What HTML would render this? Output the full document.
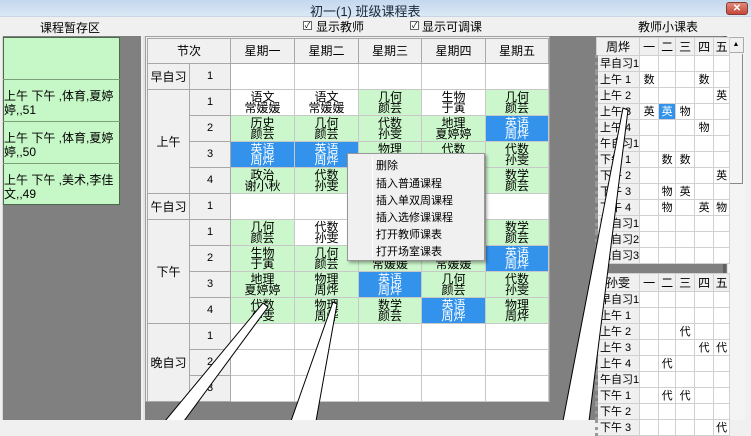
<!DOCTYPE html>
<html><head><meta charset="utf-8">
<style>
*{margin:0;padding:0;box-sizing:border-box}
body{width:751px;height:420px;overflow:hidden;background:#f0f0f0;font-family:"Liberation Sans","Noto Sans CJK SC","WenQuanYi Zen Hei",sans-serif;font-size:12px;color:#000;position:relative}
.abs{position:absolute}
#title{left:0;top:0;width:751px;height:17px;background:linear-gradient(#c4d8ee,#dbe7f4);border-bottom:1px solid #c8d6e6}
#title span{position:absolute;left:310px;top:1px;font-size:13px;color:#1a2a3a}
#close{left:726px;top:2px;width:22px;height:13px;background:linear-gradient(#e08a7a,#c4473a);border:1px solid #8a3a30;border-radius:3px;color:#fff;font-size:10px;text-align:center;line-height:11px;font-weight:bold}
.cb{width:9px;height:9px;border:1px solid #666;background:#fff;font-size:8px;line-height:7px;text-align:center}
table{border-collapse:collapse;table-layout:fixed}
#main{position:absolute;left:147px;top:38px}
#main td{border:1px solid #c8c8c8;height:26px;text-align:center;vertical-align:middle;line-height:11px;font-size:12px;padding:0;overflow:hidden}
#main tr.h td{height:25px;background:#f0f0f0;border-color:#a8a8a8;line-height:14px}
#main td.l{background:#f0f0f0;border-color:#a8a8a8;line-height:14px}
#main td.n{background:#f0f0f0;border-color:#a8a8a8;font-size:11px}
.g{background:#ccf7cc}
.b{background:#3393ec;color:#fff}
.w{background:#fff}
.tt{position:absolute;left:595px}
.tt td{border:1px solid #d0d0d0;height:16px;text-align:center;font-size:11px;padding:0;line-height:14px;background:#fff;overflow:hidden;white-space:nowrap}
.tt td.lb{background:#f0f0f0;text-align:left;padding-left:2px;border-left:3px dotted #999}
.tt tr.h td{background:#f0f0f0;height:18px;font-size:12px}
.tt td.sb{background:#3393ec;color:#fff}
#menu{left:347px;top:153px;width:138px;height:108px;background:#f0f0f0;border:1px solid #979797;box-shadow:2px 2px 3px rgba(0,0,0,.35)}
#menu .gut{position:absolute;left:24px;top:2px;bottom:2px;width:1px;background:#e0e0e0;border-right:1px solid #fff}
#menu div.i{position:absolute;left:28px;font-size:11px}
.lrow{position:absolute;left:3px;width:117px;height:42px;border-top:1px solid #7aa07a;font-size:12px;line-height:14px;padding-top:9px;padding-left:1px}
</style></head><body>
<div id="title" class="abs"><span>初一(1) 班级课程表</span></div>
<div id="close" class="abs">✕</div>

<div class="abs" style="left:40px;top:19px;font-size:12px">课程暂存区</div>
<div class="abs cb" style="left:303px;top:21px">✓</div>
<div class="abs" style="left:316px;top:18px;font-size:12px">显示教师</div>
<div class="abs cb" style="left:410px;top:21px">✓</div>
<div class="abs" style="left:422px;top:18px;font-size:12px">显示可调课</div>
<div class="abs" style="left:638px;top:18px;font-size:12px">教师小课表</div>

<!-- left panel -->
<div class="abs" style="left:2px;top:36px;width:139px;height:384px;background:#808080;border-left:1px solid #d8d8d8"></div>
<div class="abs" style="left:3px;top:37px;width:117px;height:168px;background:#c6f7c6;border:1px solid #4a6a4a"></div>
<div class="lrow" style="top:79px">上午 下午 ,体育,夏婷<br>婷,,51</div>
<div class="lrow" style="top:121px">上午 下午 ,体育,夏婷<br>婷,,50</div>
<div class="lrow" style="top:163px">上午 下午 ,美术,李佳<br>文,,49</div>

<!-- main area -->
<div class="abs" style="left:143px;top:36px;width:452px;height:384px;background:#808080;border-left:2px solid #e4e4e4"></div>
<div class="abs" style="left:145px;top:36px;width:405px;height:366px;background:#f0f0f0;border:1px solid #a0a0a0"></div>
<table id="main">
<colgroup><col style="width:42px"><col style="width:41px"><col style="width:64px"><col style="width:64px"><col style="width:63px"><col style="width:64px"><col style="width:63px"></colgroup>
<tr class="h"><td colspan="2">节次</td><td>星期一</td><td>星期二</td><td>星期三</td><td>星期四</td><td>星期五</td></tr>
<tr><td class="l">早自习</td><td class="n">1</td><td class="w"></td><td class="w"></td><td class="w"></td><td class="w"></td><td class="w"></td></tr>
<tr><td class="l" rowspan="4">上午</td><td class="n">1</td><td class="w">语文<br>常媛媛</td><td class="w">语文<br>常媛媛</td><td class="g">几何<br>颜芸</td><td class="w">生物<br>于寅</td><td class="g">几何<br>颜芸</td></tr>
<tr><td class="n">2</td><td class="g">历史<br>颜芸</td><td class="g">几何<br>颜芸</td><td class="g">代数<br>孙雯</td><td class="g">地理<br>夏婷婷</td><td class="b">英语<br>周烨</td></tr>
<tr><td class="n">3</td><td class="b">英语<br>周烨</td><td class="b">英语<br>周烨</td><td class="g">物理<br>周烨</td><td class="g">代数<br>孙雯</td><td class="g">代数<br>孙雯</td></tr>
<tr><td class="n">4</td><td class="g">政治<br>谢小秋</td><td class="g">代数<br>孙雯</td><td class="g"></td><td class="g"></td><td class="g">数学<br>颜芸</td></tr>
<tr><td class="l">午自习</td><td class="n">1</td><td class="w"></td><td class="w"></td><td class="w"></td><td class="w"></td><td class="w"></td></tr>
<tr><td class="l" rowspan="4">下午</td><td class="n">1</td><td class="g">几何<br>颜芸</td><td class="w">代数<br>孙雯</td><td class="g"></td><td class="g"></td><td class="g">数学<br>颜芸</td></tr>
<tr><td class="n">2</td><td class="g">生物<br>于寅</td><td class="g">几何<br>颜芸</td><td class="g">语文<br>常媛媛</td><td class="g">语文<br>常媛媛</td><td class="b">英语<br>周烨</td></tr>
<tr><td class="n">3</td><td class="g">地理<br>夏婷婷</td><td class="g">物理<br>周烨</td><td class="b">英语<br>周烨</td><td class="g">几何<br>颜芸</td><td class="g">代数<br>孙雯</td></tr>
<tr><td class="n">4</td><td class="g">代数<br>孙雯</td><td class="g">物理<br>周烨</td><td class="g">数学<br>颜芸</td><td class="b">英语<br>周烨</td><td class="g">物理<br>周烨</td></tr>
<tr><td class="l" rowspan="3">晚自习</td><td class="n">1</td><td class="w"></td><td class="w"></td><td class="w"></td><td class="w"></td><td class="w"></td></tr>
<tr><td class="n">2</td><td class="w"></td><td class="w"></td><td class="w"></td><td class="w"></td><td class="w"></td></tr>
<tr><td class="n">3</td><td class="w"></td><td class="w"></td><td class="w"></td><td class="w"></td><td class="w"></td></tr>
</table>

<!-- teacher area -->
<div class="abs" style="left:590px;top:36px;width:137px;height:384px;background:#808080"></div>
<div class="abs" style="left:723px;top:36px;width:3px;height:384px;background:#606060"></div>
<div class="abs" style="left:727px;top:36px;width:18px;height:384px;background:#f4f4f4;border-left:1px solid #ddd"></div>
<div class="abs" style="left:728px;top:37px;width:16px;height:16px;background:#f0f0f0;border:1px solid #aaa;font-size:7px;text-align:center;line-height:14px">▲</div>
<div class="abs" style="left:728px;top:54px;width:15px;height:130px;border-right:1px solid #888;border-bottom:1px solid #888"></div>

<table class="tt" style="top:37px">
<colgroup><col style="width:38px"><col style="width:19px"><col style="width:17px"><col style="width:19px"><col style="width:19px"><col style="width:16px"></colgroup>
<tr class="h"><td>周烨</td><td>一</td><td>二</td><td>三</td><td>四</td><td>五</td></tr>
<tr><td class="lb" style="height:14px">早自习1</td><td></td><td></td><td></td><td></td><td></td></tr>
<tr><td class="lb">上午 1</td><td>数</td><td></td><td></td><td>数</td><td></td></tr>
<tr><td class="lb">上午 2</td><td></td><td></td><td></td><td></td><td>英</td></tr>
<tr><td class="lb">上午 3</td><td>英</td><td class="sb">英</td><td>物</td><td></td><td></td></tr>
<tr><td class="lb">上午 4</td><td></td><td></td><td></td><td>物</td><td></td></tr>
<tr><td class="lb">午自习1</td><td></td><td></td><td></td><td></td><td></td></tr>
<tr><td class="lb">下午 1</td><td></td><td>数</td><td>数</td><td></td><td></td></tr>
<tr><td class="lb">下午 2</td><td></td><td></td><td></td><td></td><td>英</td></tr>
<tr><td class="lb">下午 3</td><td></td><td>物</td><td>英</td><td></td><td></td></tr>
<tr><td class="lb">下午 4</td><td></td><td>物</td><td></td><td>英</td><td>物</td></tr>
<tr><td class="lb">晚自习1</td><td></td><td></td><td></td><td></td><td></td></tr>
<tr><td class="lb">晚自习2</td><td></td><td></td><td></td><td></td><td></td></tr>
<tr><td class="lb">晚自习3</td><td></td><td></td><td></td><td></td><td></td></tr>
</table>
<table class="tt" style="top:273px">
<colgroup><col style="width:38px"><col style="width:19px"><col style="width:17px"><col style="width:19px"><col style="width:19px"><col style="width:16px"></colgroup>
<tr class="h"><td>孙雯</td><td>一</td><td>二</td><td>三</td><td>四</td><td>五</td></tr>
<tr><td class="lb">早自习1</td><td></td><td></td><td></td><td></td><td></td></tr>
<tr><td class="lb">上午 1</td><td></td><td></td><td></td><td></td><td></td></tr>
<tr><td class="lb">上午 2</td><td></td><td></td><td>代</td><td></td><td></td></tr>
<tr><td class="lb">上午 3</td><td></td><td></td><td></td><td>代</td><td>代</td></tr>
<tr><td class="lb">上午 4</td><td></td><td>代</td><td></td><td></td><td></td></tr>
<tr><td class="lb">午自习1</td><td></td><td></td><td></td><td></td><td></td></tr>
<tr><td class="lb">下午 1</td><td></td><td>代</td><td>代</td><td></td><td></td></tr>
<tr><td class="lb">下午 2</td><td></td><td></td><td></td><td></td><td></td></tr>
<tr><td class="lb">下午 3</td><td></td><td></td><td></td><td></td><td>代</td></tr>
</table>

<!-- context menu -->
<div id="menu" class="abs"><div class="gut"></div>
<div class="i" style="top:3px">删除</div>
<div class="i" style="top:21px">插入普通课程</div>
<div class="i" style="top:38px">插入单双周课程</div>
<div class="i" style="top:55px">插入选修课课程</div>
<div class="i" style="top:72px">打开教师课表</div>
<div class="i" style="top:89px">打开场室课表</div>
</div>

<!-- callout wedges -->
<svg class="abs" style="left:0;top:0" width="751" height="420">
<polygon points="263,303 268,307 184,421 165,421" fill="#fff" stroke="#000" stroke-width="1"/>
<polygon points="333,302 337,304 316,421 291,421" fill="#fff" stroke="#000" stroke-width="1"/>
<polygon points="623,108 628,110 589,421 563,421" fill="#fff" stroke="#000" stroke-width="1"/>
</svg>
</body></html>
